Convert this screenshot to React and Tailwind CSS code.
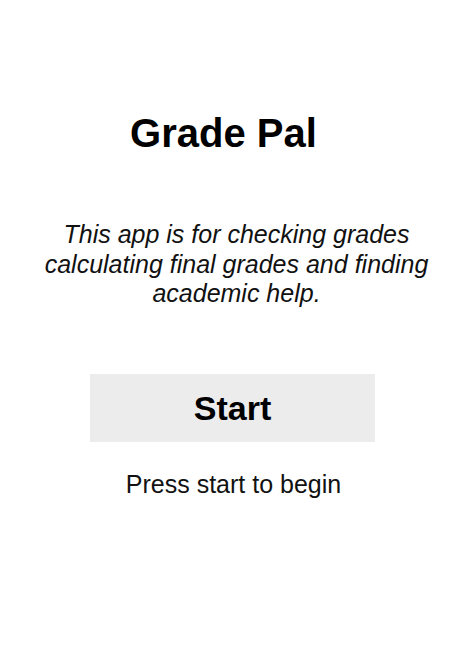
export default function App() {
  return (
    <div className="w-full min-h-screen bg-white flex flex-col items-center text-black" style={{ fontFamily: '"Liberation Sans", Arial, sans-serif' }}>
      <h1 className="mt-[110px] pr-[26px] text-[40px] font-bold leading-[46px]">Grade Pal</h1>
      <p className="mt-[64px] w-[420px] text-center italic text-[25px] leading-[29.5px] text-[#111]">
        This app is for checking grades calculating final grades and finding academic help.
      </p>
      <button className="mt-[65.5px] mr-[8px] w-[285px] h-[68px] bg-[#ececec] text-[34px] font-bold flex items-center justify-center">
        Start
      </button>
      <p className="mt-[28px] text-[25px] leading-[28px] text-[#111] pr-[6px]">Press start to begin</p>
    </div>
  );
}
